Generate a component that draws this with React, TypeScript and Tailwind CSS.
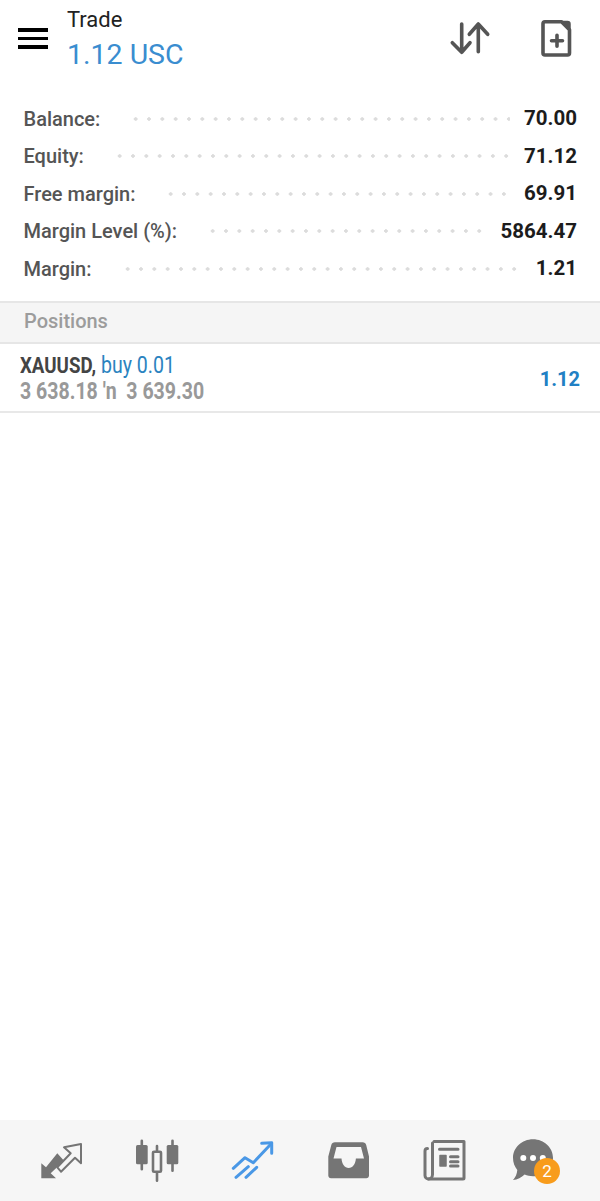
const accounts = [
  { label: 'Balance:', value: '70.00' },
  { label: 'Equity:', value: '71.12' },
  { label: 'Free margin:', value: '69.91' },
  { label: 'Margin Level (%):', value: '5864.47' },
  { label: 'Margin:', value: '1.21' },
];

function SortIcon() {
  return (
    <svg viewBox="0 0 48 48" className="w-12 h-12" fill="none" stroke="#555" strokeWidth="3.6" strokeLinecap="round" strokeLinejoin="round">
      <path d="M15.7 10v27.7M6.3 28.7l9.4 9.6 8.3-9.6" />
      <path d="M32.3 10v27.7M23.3 20.3 32.3 10l9.4 10.3" />
    </svg>
  );
}

function NewOrderIcon() {
  return (
    <svg viewBox="0 0 48 48" className="w-12 h-12" fill="none" stroke="#555" strokeWidth="3.6" strokeLinecap="round" strokeLinejoin="round">
      <path d="M12 7.700h16.500l8 8V39a2 2 0 0 1-2 2H12a2 2 0 0 1-2-2V9.700a2 2 0 0 1 2-2z" />
      <path d="M29 7.500h5.500a2.500 2.500 0 0 1 2.500 2.500v5.500z" fill="#555" strokeWidth="1.500" />
      <path d="M18.500 26.700h11M24 21.200v11" />
    </svg>
  );
}

function QuotesIcon() {
  return (
    <svg viewBox="0 0 48 48" className="w-12 h-12">
      <path d="M4.300 26.300v15H19l-5.300-5L27 23.700l-6.700-7.400L9 30.300z" fill="#757575" />
      <path d="M44 7v19.300l-6-5.600-14 14-3.700-4.400 13.400-14L27 10.300z" fill="none" stroke="#757575" strokeWidth="2" strokeLinejoin="round" />
    </svg>
  );
}

function ChartIcon() {
  return (
    <svg viewBox="0 0 48 48" className="w-12 h-12" fill="none" stroke="#757575" strokeLinecap="round">
      <path d="M8.800 3.700v28.600M39.500 3.700v30" strokeWidth="2.600" />
      <rect x="3" y="8" width="11.700" height="19.300" rx="1.500" fill="#757575" stroke="none" />
      <rect x="33.700" y="8" width="11.600" height="19.300" rx="1.500" fill="#757575" stroke="none" />
      <path d="M24 9v4.700M24 35.700v8" strokeWidth="2.600" />
      <rect x="20" y="14.700" width="8" height="20" rx="1" strokeWidth="2.600" />
    </svg>
  );
}

function TradeIcon() {
  return (
    <svg viewBox="0 0 48 48" className="w-12 h-12" fill="none" stroke="#4a98e6" strokeWidth="3" strokeLinecap="round" strokeLinejoin="round">
      <path d="M4.300 31.300 16 20.700l8.300 5L41 8" />
      <path d="M32.700 6.300l10-.6v10.600" />
      <path d="M7 40.300l12.300-10.600M17 40.300l10.700-10" />
    </svg>
  );
}

function InboxIcon() {
  return (
    <svg viewBox="0 0 48 48" className="w-12 h-12">
      <path
        fillRule="evenodd"
        fill="#757575"
        d="M10 5.300h27.500c2 0 3.200 1 3.700 2.700L44 19.500V38.600c0 1.600-1.100 2.700-2.700 2.700H6c-1.600 0-2.700-1.100-2.700-2.700V19.500L6.300 8c.5-1.700 1.700-2.700 3.700-2.700zM11.500 10 8.500 21.500h8c.4 5.500 3.200 9.500 7.200 9.500s6.800-4 7.200-9.500h8.100L36 10z"
      />
    </svg>
  );
}

function NewsIcon() {
  return (
    <svg viewBox="0 0 48 48" className="w-12 h-12" fill="none" stroke="#757575" strokeWidth="3" strokeLinecap="round" strokeLinejoin="round">
      <path d="M13 4.500h30v36.500a1 1 0 0 1-1 1H7.500a3.500 3.500 0 0 1-3.500-3.500V14c0-1.500 1-2.500 2.500-2.500" />
      <path d="M11.500 6v31.500c0 2.500-2 4.500-4 4.500" />
      <path d="M18.500 12.300h18.500M29.500 19.700h7.500M29.500 24.700h7.500M29.500 29h7.500" />
      <rect x="19" y="18.500" width="6" height="10.500" fill="#757575" strokeWidth="1.500" />
    </svg>
  );
}

function ChatIcon() {
  return (
    <svg viewBox="0 0 48 48" className="w-12 h-12">
      <path d="M24 2.300c11.100 0 20 8.300 20 18.500S35.100 39.300 24 39.300c-3 0-5.800-.6-8.400-1.700C12.500 40.500 8.500 43 4 43c2.600-2.700 4-6 4.300-10C5.600 29.800 4 25.500 4 20.800 4 10.600 12.900 2.300 24 2.300z" fill="#757575" />
      <circle cx="14.300" cy="21" r="3" fill="#fff" />
      <circle cx="24" cy="21" r="3" fill="#fff" />
      <circle cx="33.800" cy="21" r="3" fill="#fff" />
    </svg>
  );
}

export default function App() {
  return (
    <div className="h-[1201px] w-[600px] flex flex-col bg-white font-['Roboto',sans-serif] overflow-hidden">
      <header className="h-[99px] shrink-0 flex items-start">
        <div className="w-[67px] pl-[18px] pt-7 flex flex-col gap-[5px] shrink-0">
          <div className="h-[3.500px] w-[30px] bg-black" />
          <div className="h-[3.500px] w-[30px] bg-black" />
          <div className="h-[3.500px] w-[30px] bg-black" />
        </div>
        <div className="flex-1 pt-[7px]">
          <div className="text-[22px] leading-[26px] text-[#222]">Trade</div>
          <div className="text-[28.500px] leading-[43px] text-[#3a8dd0]">1.12 USC</div>
        </div>
        <div className="flex items-center gap-[39px] pt-[14px] pr-[19px]">
          <SortIcon />
          <NewOrderIcon />
        </div>
      </header>

      <section className="shrink-0 pl-[23.500px] pr-[23px] pt-px">
        {accounts.map((row) => (
          <div key={row.label} className="h-[37.500px] flex items-center">
            <span className="font-medium text-[20px] text-[#555] whitespace-nowrap">{row.label}</span>
            <div className="flex-1 h-1 ml-[29px] mr-[14px] bg-[radial-gradient(circle,#dcdcdc_1.500px,transparent_2px)] bg-[length:13.330px_4px]" />
            <span className="font-bold text-[20.500px] text-[#1c1c1c] whitespace-nowrap">{row.value}</span>
          </div>
        ))}
      </section>

      <div className="mt-[13px] h-[43px] shrink-0 flex items-center pl-6 pb-[2px] bg-[#f5f5f5] border-y-2 border-[#e6e6e6] text-[20px] font-medium text-[#9c9c9c]">
        Positions
      </div>

      <div className="h-[69px] shrink-0 flex items-center justify-between pl-5 pr-5 pt-[3px] border-b-2 border-[#e8e8e8]">
        <div className="origin-left scale-x-[0.85] whitespace-nowrap">
          <div className="leading-[24px]">
            <span className="font-bold text-[22px] text-[#444]">XAUUSD,</span>
            <span className="text-[23px] text-[#2b83c0]"> buy 0.01</span>
          </div>
          <div className="text-[23px] leading-[24px] font-bold text-[#999]">3 638.18 ′n&nbsp; 3 639.30</div>
        </div>
        <span className="font-bold text-[20px] text-[#2180c4]">1.12</span>
      </div>

      <div className="flex-1" />

      <nav className="h-[81px] shrink-0 flex items-center bg-[#f6f6f6] pl-[13px]">
        <div className="w-[96px] flex justify-center"><QuotesIcon /></div>
        <div className="w-[96px] flex justify-center"><ChartIcon /></div>
        <div className="w-[96px] flex justify-center"><TradeIcon /></div>
        <div className="w-[96px] flex justify-center"><InboxIcon /></div>
        <div className="w-[96px] flex justify-center"><NewsIcon /></div>
        <div className="relative ml-[-4px] w-[88px] flex justify-center">
          <ChatIcon />
          <span className="absolute left-[45px] top-[21px] w-[26px] h-[26px] rounded-full bg-[#f89c1c] text-white text-[17px] leading-[26px] text-center">2</span>
        </div>
      </nav>
    </div>
  );
}
